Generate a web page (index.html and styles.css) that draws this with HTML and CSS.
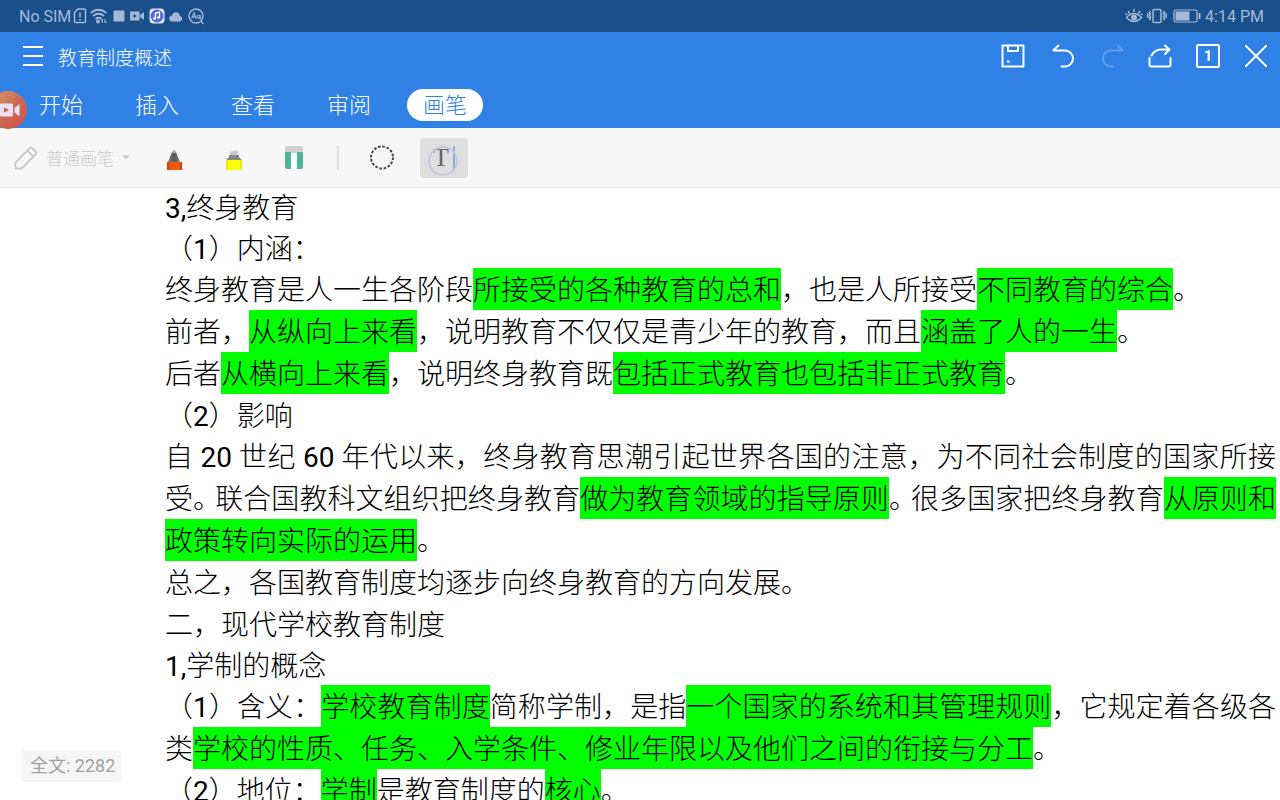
FILE: index.html
```html
<!DOCTYPE html>
<html lang="zh-CN">
<head>
<meta charset="utf-8">
<meta name="viewport" content="width=device-width, initial-scale=1">
<title>教育制度概述</title>
<link rel="stylesheet" href="styles.css">
</head>
<body>
<div class="app">
  <div class="status">
    <div class="status-group">
      <span>No SIM</span>
      <svg class="st sim" width="14" height="18" viewBox="0 0 14 18" fill="none" stroke="currentColor" stroke-width="1.5"><path d="M5 2h6.500q1 0 1 1v11.500q0 1-1 1h-9q-1 0-1-1v-9z"/><path d="M7 5.500v5M7 12v1.500"/></svg>
      <svg class="st wifi" width="20" height="18" viewBox="0 0 20 18" fill="none" stroke="currentColor" stroke-width="1.800"><path d="M1.500 6q8-6.500 16 0M4 9q5.500-4.500 11 0M6.500 12q3-2.500 6 0"/><circle cx="9" cy="14.500" r="1" fill="currentColor"/><path d="M13.500 12v4M12 14l1.500-2M16 12v4l1.500-2" stroke-width="1"/></svg>
      <svg class="st" width="12" height="12" viewBox="0 0 12 12" fill="currentColor"><rect x="0.500" y="0.500" width="11" height="11" rx="1"/></svg>
      <svg class="st cam" width="16" height="12" viewBox="0 0 16 12" fill="currentColor"><path fill-rule="evenodd" d="M1 1.500h9.500v9H1zM4.500 4v4L8 6z"/><path d="M11 5l4-3v8l-4-3z"/></svg>
      <svg class="st" width="16" height="16" viewBox="0 0 16 16"><rect x="0.500" y="0.500" width="15" height="15" rx="4" fill="#e8edff"/><circle cx="8" cy="8" r="6.500" fill="#526be0"/><path d="M6.500 10.500V5l4-1v5.500" fill="none" stroke="#fff" stroke-width="1.300"/><circle cx="5.500" cy="10.500" r="1.300" fill="#fff"/><circle cx="9.500" cy="9.500" r="1.300" fill="#fff"/></svg>
      <svg class="st cloud" width="15" height="11" viewBox="0 0 15 11" fill="currentColor"><path d="M3.500 10.500a3 3 0 0 1-.5-6 4 4 0 0 1 7.500-1q.5 1 .5 1.500a2.800 2.800 0 0 1 0 5.500z"/></svg>
      <svg class="st" width="17" height="17" viewBox="0 0 17 17" fill="none" stroke="currentColor" stroke-width="1.400"><circle cx="8" cy="8" r="7"/><path d="M12.500 13l3 3"/><path d="M3.500 10.500L6 5l2 5.500M4.500 8.800h3" stroke-width="1.200"/><circle cx="10.500" cy="9" r="1.500" stroke-width="1.200"/><path d="M12.200 7v4" stroke-width="1.200"/></svg>
    </div>
    <div class="status-group">
      <svg class="st" width="18" height="16" viewBox="0 0 18 16" fill="none" stroke="currentColor" stroke-width="1.500"><path d="M1.500 9.500q7.500-8 15 0-7.500 8-15 0z"/><circle cx="9" cy="9.500" r="2.200" fill="currentColor"/><path d="M9 4V1M4.500 5.500L3 3M13.500 5.500L15 3M2 7L.5 5.500M16 7l1.500-1.500"/></svg>
      <svg class="st vib" width="20" height="16" viewBox="0 0 20 16" fill="none" stroke="currentColor" stroke-width="1.500"><rect x="6" y="1.500" width="8" height="13" rx="1"/><path d="M3.500 3l-1 1.500 1 1.500-1 1.500 1 1.500-1 1.500 1 1.500M.8 5v5M16.500 3l1 1.500-1 1.500 1 1.500-1 1.500 1 1.500-1 1.500M19.300 5v5"/></svg>
      <svg class="st bat" width="28" height="14" viewBox="0 0 28 14" fill="none" stroke="currentColor"><rect x="1" y="1" width="23" height="12" rx="1.500" stroke-width="1.200"/><rect x="2.500" y="2.500" width="14" height="9" fill="currentColor" stroke="none"/><path d="M26.500 4v6" stroke-width="2"/></svg>
      <span>4:14 PM</span>
    </div>
  </div>

  <header class="header">
    <div class="title-row">
      <button class="icon-btn menu" aria-label="菜单"><svg width="22" height="22" viewBox="0 0 22 22" stroke="currentColor" stroke-width="2"><path d="M1 2h20M1 11h20M1 20h20"/></svg></button>
      <h1 class="title">教育制度概述</h1>
      <div class="actions">
        <button class="icon-btn save" aria-label="保存"><svg width="24" height="24" viewBox="0 0 24 24" fill="none" stroke="currentColor" stroke-width="2" stroke-linejoin="round"><path d="M1.500 1.500h21v21h-21zM7 1.500v5.500h10V1.500"/><path d="M6 17.500h2.500" /></svg></button>
        <button class="icon-btn" aria-label="撤销"><svg width="24" height="24" viewBox="0 0 24 24" fill="none" stroke="currentColor" stroke-width="2" stroke-linecap="round" stroke-linejoin="round"><path d="M6.500 1.500L1.500 6l1 .5H13a8 8 0 0 1 0 16H9.500"/></svg></button>
        <button class="icon-btn" aria-label="重做" disabled><svg width="24" height="24" viewBox="0 0 24 24" fill="none" stroke="currentColor" stroke-width="2" stroke-linecap="round" stroke-linejoin="round"><path d="M17.500 1.500l5 4.500-1 .5H11a8 8 0 0 0 0 16h2.500"/></svg></button>
        <button class="icon-btn" aria-label="分享"><svg width="24" height="24" viewBox="0 0 24 24" fill="none" stroke="currentColor" stroke-width="2" stroke-linecap="round" stroke-linejoin="round"><path d="M1.500 14v6.500q0 2 2 2h17q2 0 2-2V14M3.500 11.500q3-5.500 9-6h9M17 1.500l4.500 4-4.500 4.500"/></svg></button>
        <button class="icon-btn page" aria-label="页面">1</button>
        <button class="icon-btn" aria-label="关闭"><svg width="24" height="24" viewBox="0 0 24 24" fill="none" stroke="currentColor" stroke-width="2" stroke-linecap="round"><path d="M2 2l20 20M22 2L2 22"/></svg></button>
      </div>
    </div>
    <nav class="tabs">
      <button class="tab"><span>开始</span></button>
      <button class="tab"><span>插入</span></button>
      <button class="tab"><span>查看</span></button>
      <button class="tab"><span>审阅</span></button>
      <button class="tab active"><span>画笔</span></button>
    </nav>
    <button class="recorder" aria-label="录屏"><svg width="38" height="38" viewBox="0 0 38 38"><defs><linearGradient id="rec" x1="0" y1="0" x2="1" y2="1"><stop offset="0" stop-color="#d79a68"/><stop offset=".55" stop-color="#c96a50"/><stop offset="1" stop-color="#d84f4d"/></linearGradient></defs><circle cx="19" cy="19" r="19" fill="url(#rec)"/><rect x="11" y="12.500" width="13" height="13" rx="1" fill="#e9e0f4"/><path d="M25.500 17l5-4v12.500l-5-4z" fill="#e9e0f4"/><path d="M15 16.500v5l5-2.500z" fill="#ce5552"/></svg></button>
  </header>

  <div class="toolbar">
    <button class="pen-type" disabled>
      <svg width="24" height="24" viewBox="0 0 24 24" fill="none" stroke="currentColor" stroke-width="1.800" stroke-linejoin="round"><path d="M1.500 22.500v-6L16 2q1-1 2 0l4 4q1 1 0 2L7.500 22.500zM13.500 4.500l6 6"/></svg>
      <span>普通画笔</span>
      <svg width="8" height="6" viewBox="0 0 8 6" fill="currentColor"><path d="M.5.500h7L4 4.500z"/></svg>
    </button>
    <button class="tool" aria-label="钢笔"><svg width="16" height="24" viewBox="0 -4 16 24"><defs><linearGradient id="g" x1="0" x2="1" y1="0" y2="0"><stop offset="0" stop-color="#888"/><stop offset=".5" stop-color="#555"/><stop offset="1" stop-color="#888"/></linearGradient></defs><path d="M8 0L5.500 3 2 12h12L10.500 3z" fill="url(#g)"/><path d="M8 0L6 3h4z" fill="#aaa"/><rect x="1" y="12" width="15" height="8" fill="#ed5a08"/><path d="M1 12h2v8H1zM14 12h2v8h-2z" fill="#c74905"/></svg></button>
    <button class="tool" aria-label="荧光笔"><svg width="16" height="24" viewBox="0 -4 16 24"><path d="M4 2l8-2v5H4z" fill="#c8c8c8"/><path d="M3 5h10v2l3 3v1H0v-1l3-3z" fill="#858585"/><rect y="10" width="16" height="10" fill="#fdfd06"/><path d="M0 10h2v10H0zM14 10h2v10h-2z" fill="#e8e813"/></svg></button>
    <button class="tool" aria-label="橡皮擦"><svg width="18" height="24" viewBox="0 0 18 24"><path d="M0 7V2q0-2 2-2h14q2 0 2 2v5z" fill="#d0d0d0"/><path d="M6 7h6v16H6z" fill="#fff"/><path d="M0 6h6v17H2q-2 0-2-2zM12 6h6v15q0 2-2 2h-4z" fill="#50b49c"/></svg></button>
    <span class="divider"></span>
    <button class="tool select" aria-label="套索"><svg width="26" height="26" viewBox="0 0 26 26" fill="none" stroke="#444" stroke-width="2"><circle cx="13" cy="12.500" r="11" stroke-dasharray="2.600 1.720"/></svg></button>
    <button class="tool text-tool" aria-label="文字"><span class="letter">T</span><span class="caret"></span><span class="touch"></span></button>
  </div>

  <main class="document">
    <h2 class="line"><span class="num">3,</span>终身教育</h2>
    <h3 class="line">（<span class="num">1</span>）内涵：</h3>
    <p>终身教育是人一生各阶段<mark>所接受的各种教育的总和</mark>，也是人所接受<mark>不同教育的综合</mark>。</p>
    <p>前者，<mark>从纵向上来看</mark>，说明教育不仅仅是青少年的教育，而且<mark>涵盖了人的一生</mark>。</p>
    <p>后者<mark>从横向上来看</mark>，说明终身教育既<mark>包括正式教育也包括非正式教育</mark>。</p>
    <h3 class="line">（<span class="num">2</span>）影响</h3>
    <p>自 <span class="num">20</span> 世纪 <span class="num">60</span> 年代以来，终身教育思潮引起世界各国的注意，为不同社会制度的国家所接受<span class="stop">。</span>联合国教科文组织把终身教育<mark>做为教育领域的指导原则</mark><span class="stop">。</span>很多国家把终身教育<mark>从原则和政策转向实际的运用</mark>。</p>
    <p>总之，各国教育制度均逐步向终身教育的方向发展。</p>
    <h2 class="line">二，现代学校教育制度</h2>
    <h2 class="line"><span class="num">1,</span>学制的概念</h2>
    <p>（<span class="num">1</span>）含义：<mark>学校教育制度</mark>简称学制，是指<mark>一个国家的系统和其管理规则</mark>，它规定着各级各类<mark>学校的性质、任务、入学条件、修业年限以及他们之间的衔接与分工</mark>。</p>
    <p>（<span class="num">2</span>）地位：<mark>学制</mark>是教育制度的<mark>核心</mark>。</p>
    <div class="count">全文: 2282</div>
  </main>
</div>
</body>
</html>
```
FILE: styles.css
```css
* { box-sizing: border-box; }

body {
  margin: 0;
  background: #fff;
  font-family: Roboto, "Noto Sans CJK SC", sans-serif;
}

button {
  border: 0;
  padding: 0;
  background: none;
  color: inherit;
  font: inherit;
}

svg { display: block; flex: none; }

.app {
  display: flex;
  flex-direction: column;
  height: 100vh;
  overflow: hidden;
}

.status {
  display: flex;
  flex: none;
  align-items: center;
  justify-content: space-between;
  height: 32px;
  padding: 0 16px 0 19px;
  background: #194f8b;
  color: #a5b9d6;
  font-size: 16px;
}

.status-group { display: flex; align-items: center; gap: 4px; }
.status .sim { margin: 0 -2px; }
.status .bat { margin-left: 2px; }

.header {
  position: relative;
  flex: none;
  background: #3081e6;
  color: #fff;
}

.title-row {
  display: flex;
  align-items: center;
  height: 50px;
  padding: 0 0 2px 22px;
}

.title {
  margin: 0 0 0 14px;
  font-size: 19px;
  font-weight: 300;
}

.actions { display: flex; margin-left: auto; }

.icon-btn {
  display: flex;
  align-items: center;
  justify-content: center;
  width: 48px;
  height: 48px;
}

.icon-btn.menu { width: 22px; }
.icon-btn.save { width: 54px; }
.icon-btn:disabled { color: #5f9fed; }

.icon-btn.page {
  width: 24px;
  height: 24px;
  margin: 12px;
  border: 2px solid #fff;
  border-radius: 2px;
  font-size: 14px;
  font-weight: 700;
}

.tabs { display: flex; height: 46px; padding-left: 13px; }

.tab {
  display: flex;
  align-items: flex-start;
  justify-content: center;
  width: 96px;
  padding-top: 7px;
  font-size: 22px;
  font-weight: 300;
  line-height: 30px;
}

.tab span { padding: 2px 16px 0; border-radius: 16px; }
.tab.active span { background: #fff; color: #3081e6; }

.recorder { position: absolute; left: -11px; bottom: -1px; z-index: 1; }

.toolbar {
  display: flex;
  flex: none;
  align-items: center;
  height: 60px;
  padding-left: 14px;
  border-bottom: 1px solid #e3e3e3;
  background: #f7f7f7;
}

.pen-type {
  display: flex;
  align-items: center;
  gap: 8px;
  margin-right: 14px;
  color: #c9c9cb;
  font-size: 17px;
  font-weight: 300;
}

.tool {
  display: flex;
  align-items: center;
  justify-content: center;
  width: 60px;
  height: 40px;
}

.divider { width: 2px; height: 24px; margin: 0 13px; background: #e0e0e0; }

.text-tool {
  position: relative;
  gap: 4px;
  width: 48px;
  margin-left: 8px;
  border-radius: 4px;
  background: #dedede;
}

.letter { color: #666; font: 26px "Liberation Serif", serif; }
.caret { width: 2px; height: 24px; background: #7fb2e8; }

.touch {
  position: absolute;
  top: 8px;
  left: 8px;
  width: 30px;
  height: 30px;
  border: 2px solid #c5c8dc;
  border-radius: 50%;
}

.document {
  position: relative;
  flex: 1;
  min-height: 0;
  overflow: hidden;
  padding: 0 4px 0 165px;
  color: #000;
  font-size: 28px;
  font-weight: 300;
  line-height: 42px;
}

.document p { margin: 0; text-align: justify; }

.line {
  margin: 0;
  font-size: 28px;
  font-weight: 300;
  line-height: 41px;
}

.num { font-weight: 400; }

mark {
  padding: 6px 0 3px;
  background: #0f0;
  color: inherit;
}

.stop { margin-right: -6px; }

.count {
  position: absolute;
  bottom: 18px;
  left: 22px;
  padding: 0 6px 0 8px;
  border-radius: 2px;
  background: #f5f5f5;
  color: #a0a0a0;
  font-size: 18px;
  line-height: 32px;
}

.count { font-weight: 400; }
```
